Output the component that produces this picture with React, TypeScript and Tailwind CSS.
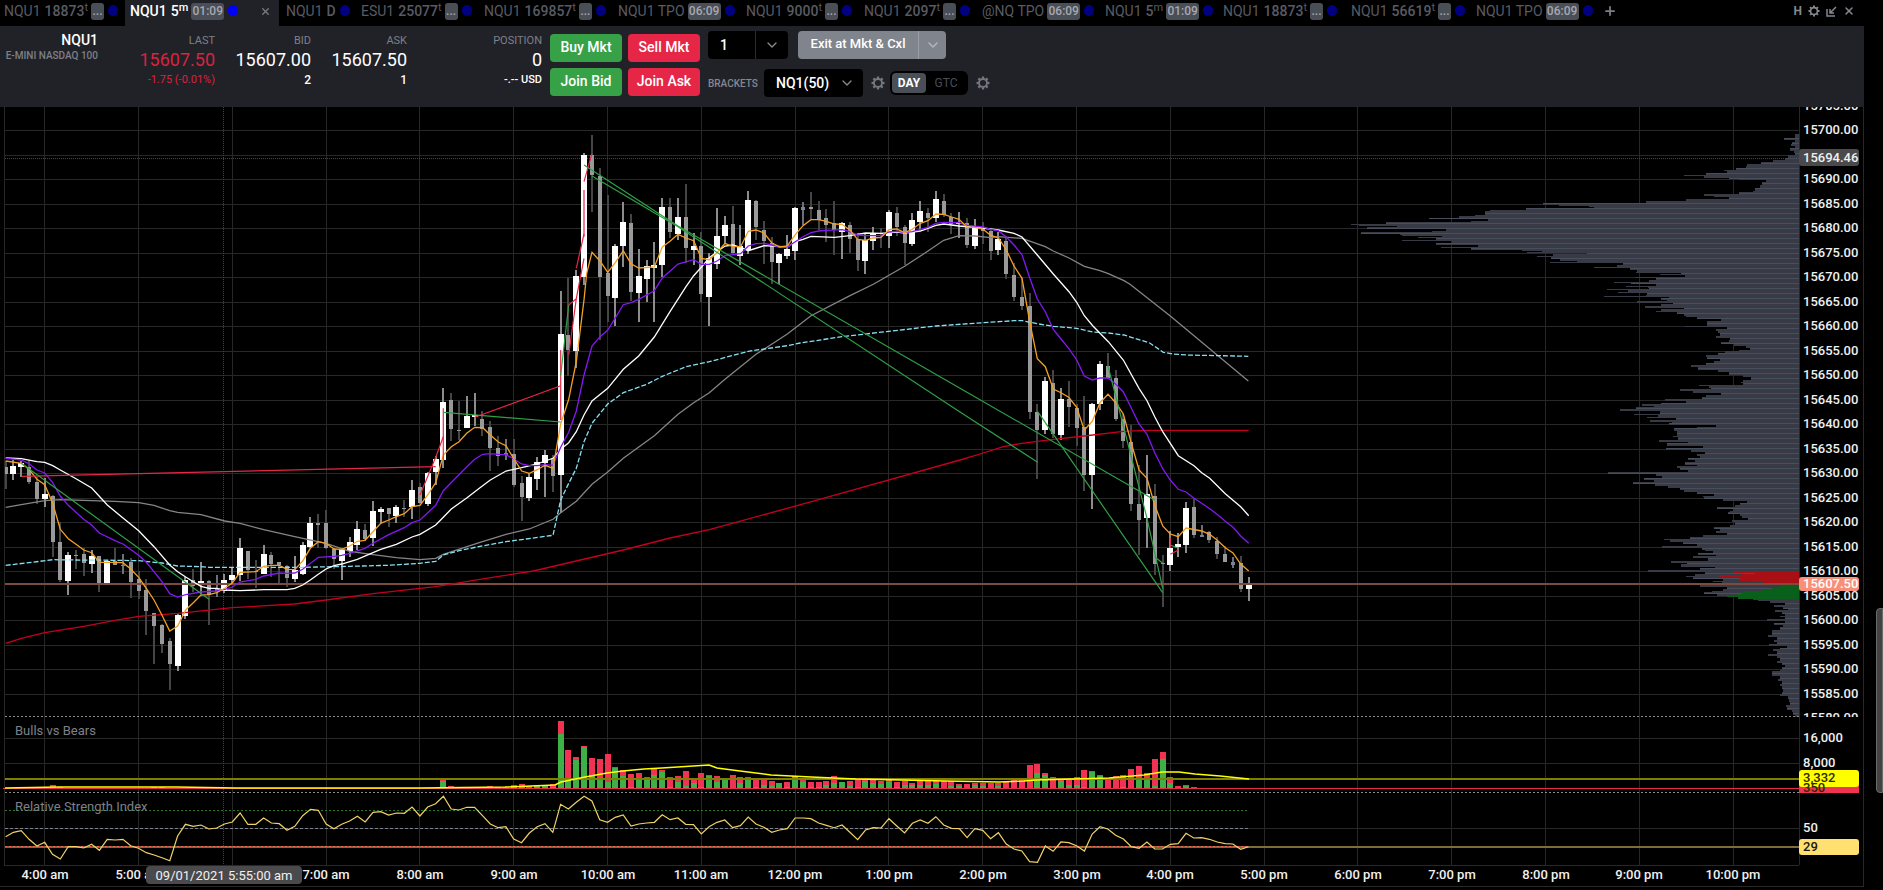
import { ChevronDown, Plus, X } from 'lucide-react';

/* ---------- tabs ---------- */

const tabs = [
  { symbol: 'NQU1', size: '18873', unit: 't', badge: '...', width: 'w-[125px]' },
  { symbol: 'NQU1', size: '5', unit: 'm', badge: '01:09', width: 'w-[154px]', active: true },
  { symbol: 'NQU1', size: 'D', unit: '', badge: '', width: 'w-[75px]' },
  { symbol: 'ESU1', size: '25077', unit: 't', badge: '...', width: 'w-[123px]' },
  { symbol: 'NQU1', size: '169857', unit: 't', badge: '...', width: 'w-[134px]' },
  { symbol: 'NQU1 TPO', size: '', unit: '', badge: '06:09', width: 'w-[128px]' },
  { symbol: 'NQU1', size: '9000', unit: 't', badge: '...', width: 'w-[118px]' },
  { symbol: 'NQU1', size: '2097', unit: 't', badge: '...', width: 'w-[118px]' },
  { symbol: '@NQ TPO', size: '', unit: '', badge: '06:09', width: 'w-[123px]' },
  { symbol: 'NQU1', size: '5', unit: 'm', badge: '01:09', width: 'w-[118px]' },
  { symbol: 'NQU1', size: '18873', unit: 't', badge: '...', width: 'w-[128px]' },
  { symbol: 'NQU1', size: '56619', unit: 't', badge: '...', width: 'w-[125px]' },
  { symbol: 'NQU1 TPO', size: '', unit: '', badge: '06:09', width: 'w-[128px]' },
];

/* ---------- chart geometry ---------- */

const LEFT = 5;
const RIGHT = 1799;
const TOP = 107;
const PRICE_BOTTOM = 717;
const VOLUME_BOTTOM = 789;
const BOTTOM = 865;

const barX = (i: number) => 44.7 + 7.817 * i;
const priceY = (price: number) => 130.6 + (15700 - price) * 4.9;

const hours = [
  '4:00 am', '5:00 am', '6:00 am', '7:00 am', '8:00 am', '9:00 am', '10:00 am', '11:00 am', '12:00 pm', '1:00 pm',
  '2:00 pm', '3:00 pm', '4:00 pm', '5:00 pm', '6:00 pm', '7:00 pm', '8:00 pm', '9:00 pm', '10:00 pm',
];
const prices = Array.from({ length: 26 }, (_, i) => 15705 - i * 5);

/* ---------- chart data ---------- */

type Point = [number, number];
type Block = [number, number, string];

const pairs = (text: string) =>
  text.trim().split(/\s+/).map((pair) => pair.split(',').map(Number) as Point);

// Points are stored in thirds of a pixel, relative to the origin of their block
const trace = (...blocks: Block[]) =>
  blocks
    .flatMap(([ox, oy, text]) =>
      pairs(text).map(([x, y]) => `${((x + ox) / 3).toFixed(1)},${((y + oy) / 3).toFixed(1)}`),
    )
    .join(' ');

// kind + high,bodyTop,bodyBottom,low (u = up, d = down, n = unchanged)
const candleBlocks: [number, number, string][] = [
  [-5, 1140, `d243,262,281,326 u240,258,282,299 u243,248,261,290 d240,262,306,311 d290,306,357,372
    u294,342,356,381 d345,348,486,532 d427,486,600,606 u517,525,603,644 d510,524,528,567 d503,522,549,588
    u511,529,552,578 d527,528,608,635 u542,543,611,611 d503,542,554,554 n522,555,559,581 d535,546,606,653
    d572,598,633,657 d598,630,692,764 d700,700,738,853 d732,735,793,818 d774,784,851,929 u702,706,857,872
    u590,600,708,716 d567,600,618,636 u546,603,612,643 d600,604,645,735 n585,628,636,651 u583,600,634,640
    u562,585,601,612 u475,504,584,602 d513,514,570,597 d540,572,575,625 u495,522,581,581 d516,524,552,591
    d546,547,556,612 d556,558,594,620 u528,570,598,605 u485,496,583,584 u411,430,500,504 d401,429,434,504
    d390,429,505,508 d505,507,538,566 u507,508,543,600 u470,486,512,532 u423,448,494,510 d432,450,478,483
    u363,394,474,497 u380,387,396,430 d384,385,402,440 u375,381,409,430 d360,384,388,410 u300,331,380,416
    d310,322,369,372 u276,279,371,377 u228,236,275,316 u24,67,240,264 d40,60,147,184`],
  [53, 330, `d873,959,963,990 u858,918,953,953 u850,915,922,947 d903,927,956,978 d933,951,1014,1082
    d978,1013,1038,1067 n987,1028,1036,1050 d987,1033,1124,1132 d1098,1120,1161,1232 u1090,1102,1163,1173
    u1040,1056,1107,1140 u1020,1035,1060,1161 d1036,1044,1098,1147 u543,671,1096,1210 d504,676,720,798
    u480,498,724,774 u129,136,500,525 d75,136,194,307 d174,198,502,690 d255,490,558,636 u402,408,563,648
    u276,337,408,472 d312,339,546,573 u417,498,548,637 u450,468,508,577 u397,465,473,636 u265,290,464,502
    d265,290,366,385 u265,321,372,390 d222,320,414,460 u370,408,419,465 d366,408,551,575 u430,444,560,648
    u294,377,461,477 u318,345,378,402 d288,341,430,432 u345,408,438,465 u243,270,420,432 d270,272,352,390
    d333,360,392,462 d380,400,455,521 u430,432,459,521 u375,418,438,446 u290,293,422,450 n276,292,300,345
    d246,290,296,326`],
  [99, 510, `d93,120,150,180 d118,143,165,215 d93,160,180,254 u155,160,186,267 d156,165,208,250
    d190,208,271,303 u192,210,273,311 u171,188,214,240 d175,189,193,234 u120,126,197,234 d111,128,172,197
    d164,170,219,285 u130,150,222,227 u93,123,156,178 d115,128,143,185 u63,87,144,156 d72,92,136,140
    d130,140,162,193 u126,158,163,203 d145,158,224,233 u147,167,228,237 d155,172,184,222 d180,183,242,270
    u186,206,240,255 d205,214,312,326 d280,316,381,392 d320,381,408,419`],
  [126, 840, `d40,78,396,418 d373,396,450,598 u291,304,450,461 d270,309,462,474 u324,356,465,480
    d303,357,381,440 d372,384,444,498 d348,441,584,632 u369,371,586,687 u243,252,372,390 d219,258,293,296
    d270,294,416,423 d402,417,483,503 d435,486,672,693 d555,672,720,825 u525,642,714,804 d612,648,852,885
    d825,848,853,980 u752,804,854,872 u758,793,801,830 u666,684,794,819 d654,681,765,773 n735,764,770,772
    d752,757,780,788 d771,782,822,837 d798,822,846,847 n831,846,856,864 d828,850,927,935 u891,912,927,963`],
];

const candles = candleBlocks.flatMap(([start, base, text]) =>
  text.trim().split(/\s+/).map((item, k) => {
    const [high, top, bottom, low] = item.slice(1).split(',').map((v) => Math.round((Number(v) + base) / 3));
    return { i: start + k, kind: item[0], high, top, bottom, low };
  }),
);

const bodyFill: Record<string, string> = { u: '#ffffff', d: '#999999', n: '#7d8290' };
const wickFill: Record<string, string> = { u: '#8c8c8c', d: '#454545', n: '#6a6f7c' };

const fastEma = trace(
  [0, 1140, `17,243 64,250 87,268 111,298 134,314 158,370 181,448 205,476 228,493 251,510 275,518 298,547 322,547
    369,548 392,567 416,592 439,625 462,660 486,706 509,753 533,738 557,690 580,668 603,645 627,644 650,638
    674,625 697,609 720,577 767,575 791,559 814,556 838,556 861,568 884,569 908,543 931,505 955,485 978,490
    1002,507 1025,508 1049,498 1072,484 1095,481 1119,455 1142,430 1166,420 1189,410 1213,401 1236,380 1260,376
    1283,345 1307,308 1330,225 1354,200 1377,185 1400,160`],
  [1260, 330, `164,952 188,953 211,975 235,996 258,1007 281,1046 305,1083 328,1090 352,1079 375,1066 399,1075
    422,942 446,868 469,755 492,570 500,490 516,427 540,453 563,487 586,458 610,422 633,461 656,474 703,471
    727,411 750,394 774,373 798,384 821,392 844,445 868,449 891,428 915,400 938,410 962,410 985,364 1008,360
    1032,369 1055,398 1079,411 1102,408 1126,374 1149,347 1173,329`],
  [2400, 510, `56,149 79,154 103,162 126,163 150,181 173,208 197,211 220,204 243,202 267,179 290,177 314,188
    337,178 361,160 384,152 408,132 431,133 455,141 477,148 502,172 525,172 548,177 572,196 595,203 619,240
    642,288 666,325 689,455 712,566 736,590`],
  [2880, 840, `280,327 303,338 326,352 350,382 373,450 397,424 420,368 444,343 467,368 490,402 514,489 537,570
    561,595 584,675 608,738 631,762 655,770 678,744 725,753 749,763 771,780 796,803 819,819 842,852 866,873`],
);

const midEma = trace(
  [0, 1140, `17,235 64,240 87,251 111,270 134,279 158,308 181,348 205,376 251,418 275,435 298,459 345,482 369,492
    416,526 439,547 486,605 509,641 533,651 557,644 603,636 650,633 674,628 697,621 720,606 767,598 791,588
    838,579 861,580 884,579 908,568 955,532 1002,529 1025,526 1049,520 1095,505 1119,490 1166,464 1213,443
    1236,428 1260,420 1307,376 1330,332 1377,284 1400,261`],
  [1260, 330, `164,1048 188,1033 211,1031 235,1033 258,1034 281,1047 305,1062 328,1067 352,1067 375,1064 399,1066
    422,1012 446,967 469,903 492,795 516,708 540,680 563,661 610,584 633,578 656,568 703,542 727,504 774,462
    821,449 844,463 868,463 891,453 915,437 962,431 985,408 1008,401 1032,400 1055,405 1079,411 1102,411
    1126,395 1149,380 1173,368`],
  [2400, 510, `56,183 79,181 126,179 150,185 173,195 197,197 243,197 267,186 290,184 314,188 337,185 361,178
    384,172 408,160 431,157 477,158 502,166 548,171 572,178 595,182 619,201 642,225 666,254 689,323 712,387
    736,425`],
  [2880, 840, `280,148 303,177 326,205 350,240 373,288 397,300 420,294 444,294 467,312 490,336 514,384 537,432
    561,463 584,518 608,566 631,600 655,628 678,636 702,655 725,670 749,686 771,703 796,724 819,742 842,768
    866,790`],
);

const slowEma = trace(
  [0, 1140, `17,234 64,236 111,245 134,247 158,257 181,270 228,296 275,324 322,375 369,414 416,452 462,500
    509,555 533,575 557,591 580,605 603,619 627,625 650,625 674,630 720,632 791,629 861,629 884,625 908,615
    931,600 955,583 978,567 1002,557 1025,552 1072,538 1119,518 1142,508 1189,493 1236,471 1260,463 1307,435
    1330,412 1354,387 1400,354 1440,323`],
  [1260, 330, `211,1110 258,1083 305,1073 352,1062 375,1053 399,1045 422,1018 446,998 469,965 492,915 516,873
    563,835 610,778 656,738 703,681 750,605 798,530 821,497 844,472 868,443 891,425 915,408 938,405 962,412
    985,422 1032,407 1102,411 1126,395 1149,388 1173,379`],
  [2400, 510, `33,199 103,202 150,197 197,189 243,190 290,186 314,189 361,183 408,166 431,162 477,168 548,174
    595,180 642,190 666,201 712,255 760,312 807,365 830,397 853,437 878,467 925,515`],
  [2880, 840, `490,240 537,325 561,362 584,410 608,455 655,527 702,557 725,578 749,595 796,641 842,680 866,707`],
);

const sma = trace(
  [0, 1140, `17,382 64,374 134,362 181,359 251,361 345,364 416,368 462,376 509,392 533,397 603,404 674,423
    720,430 791,449 884,470 978,490 1049,514 1119,524 1189,533 1260,539 1307,535 1330,523 1440,487`],
  [1260, 330, `258,1273 328,1257 399,1228 422,1208 469,1174 516,1123 563,1086 610,1045 703,977 774,913 821,878
    868,848 915,808 1008,733 1102,672`],
  [2400, 510, `0,463 33,437 150,377 220,343 314,289 384,243 431,211 477,197 525,198 572,203 595,200 666,205
    736,230 760,243 807,264 853,289 900,302 925,311 972,332 990,343 1111,438 1345,633`],
);

const vwap = trace(
  [0, 1140, `17,556 87,548 158,539 228,540 345,541 416,542 486,549 533,558 603,560 627,562 908,562 1049,559
    1166,556 1260,550 1307,544 1330,525 1377,512 1440,499`],
  [1260, 330, `258,1295 399,1276 422,1170 446,1120 469,1075 492,995 516,940 563,882 610,848 680,823 727,799
    798,770 868,755 985,724 1102,707`],
  [2400, 510, `0,519 126,500 267,484 408,468 548,458 642,452 666,452 712,461 760,469 830,475 878,486 925,489
    972,495 1049,519 1090,547 1120,552 1160,555 1345,559`],
);

const longSma = trace(
  [0, 1140, '17,790 64,775 134,758 251,739 345,721 416,709 533,700 697,683 884,672 978,660 1119,641 1307,620 1440,598'],
  [1260, 330, '340,1383 610,1320 750,1284 868,1259 1196,1169'],
  [2880, 840, '0,540 70,519 130,500 185,490 280,478 373,468 490,454 560,451 866,451'],
);

const redTrades = [
  trace([0, 1140, '64,289 1307,260']),
  trace([0, 1140, '1260,345 1307,232 1330,170']),
  trace([0, 1140, '1330,85 1330,240']),
  trace([1260, 330, '164,922 422,827']),
  trace([1260, 330, '422,720 422,930']),
  trace([1260, 330, '446,735 469,566 446,585']),
  trace([1260, 330, '469,475 492,372']),
  trace([1260, 330, '469,566 492,445']),
  trace([1260, 330, '492,240 492,380']),
  trace([1260, 330, '492,215 516,130']),
  trace([2880, 840, '631,773 631,803']),
  trace([2880, 840, '631,823 655,810']),
];

const greenTrades = [
  trace([0, 1140, '64,250 627,658']),
  trace([1260, 330, '71,907 422,936']),
  trace([1260, 330, '422,795 446,585']),
  trace([1260, 330, '492,165 774,348'], [2880, 840, '0,325 584,660']),
  trace([1260, 330, '516,198 774,350'], [2880, 840, '0,396 233,547']),
  trace([2880, 840, '233,395 608,938']),
  trace([2880, 840, '444,258 561,715 608,925']),
  trace([2880, 840, '584,830 608,850']),
  trace([2880, 840, '631,795 655,805']),
];

/* Volume profile: y,left edge for each row, right aligned */
const profileOutline = (base: number, edge: number, scale: number, text: string) => {
  const rows = pairs(text);
  let d = `M${RIGHT},${(base + rows[0][0] / 3).toFixed(1)}`;
  rows.forEach(([y, x], k) => {
    const next = k + 1 < rows.length ? rows[k + 1][0] : y + 4;
    d += `V${(base + y / 3).toFixed(1)}H${(RIGHT - (edge - x) / scale).toFixed(1)}V${(base + next / 3).toFixed(1)}`;
  });
  return `${d}H${RIGHT}Z`;
};

const upperProfile = profileOutline(99, 1330, 2.835, `106,1318 112,1318 117,1288 122,1318 128,1310 134,1308 140,1318
  148,1305 155,1315 163,1318 168,1300 176,1290 182,1255 188,1222 195,1182 202,1180 207,1150 212,1118 217,1125
  221,1065 227,1003 232,1060 236,1132 240,1160 242,1235 250,1225 258,1220 262,1218 268,1205 275,1200 280,1160
  285,1060 290,1090 295,1130 300,1010 305,895 310,895 313,603 317,650 322,735 325,748 328,555 332,455 337,440
  343,440 348,410 352,366 356,280 360,448 365,400 370,160 374,60 378,82 382,190 385,105 390,330 395,290 400,88
  404,200 408,205 412,318 415,250 418,300 423,203 427,345 431,300 437,420 443,316 448,400 452,545 457,600 460,560
  463,730 466,632 470,587 475,628 481,652 485,700 489,623 493,832 497,815 503,750 508,850 514,870 518,868 523,995
  526,935 529,1008 533,865 538,925 543,905 548,806 552,853 556,925 560,840 563,903 567,905 570,785 574,845
  578,818 582,900 587,895 591,778 595,960 598,940 602,955 606,870 612,972 616,940 621,893 626,1003 629,940
  635,925 640,985 645,1005 650,1010 655,1040 660,1110 665,1068 670,1070 675,1070 680,1008 684,1125 690,1095
  697,1100 703,1105 710,1095 716,1135 722,1130 728,1108 734,1145 740,1180 747,1190 752,1160 755,1120 762,1100
  768,1067 775,1068 780,1105 785,1090 792,1065 797,1025 805,1043 812,1100 820,1130 828,1170 835,1195 842,1170
  848,1165 853,1170 857,1047 862,1075 868,1080 871,993 876,1030 882,1110 888,1065 894,1055 900,950 905,1010
  912,940 916,885 922,920 925,867 930,822 937,935 944,863 948,930 954,900 958,980 962,908 968,970 973,960
  978,1095 985,1040`);

const lowerProfile = profileOutline(399, 657, 3, `88,283 95,290 103,290 110,280 115,295 122,238 128,325 133,262
  140,370 147,258 153,333 160,375 166,350 172,360 177,325 184,345 190,315 197,350 201,290 208,300 213,325 220,85
  226,228 232,245 238,192 244,222 249,158 255,225 262,265 268,300 273,312 278,350 284,402 290,370 295,372 300,430
  306,500 313,480 317,465 323,411 329,460 335,450 339,443 345,480 350,485 357,503 362,455 369,465 377,450 384,402
  390,420 397,408 402,440 408,370 414,330 419,252 424,270 430,308 436,350 440,245 446,365 453,375 457,400 461,355
  467,408 472,340 477,385 485,272 491,320 496,303 503,405 508,360 514,205 519,375 525,345 530,318 535,340 539,430
  545,400 550,425 558,360 565,440 570,430 576,395 580,372 586,410 590,440 595,520 603,535 607,570 612,615 618,583
  623,610 630,625 634,585 640,605 645,615 650,600 655,615 661,561 667,615 671,583 678,610 685,600 692,575 700,575
  707,565 715,590 723,583 730,590 736,568 740,620 746,600 750,580 757,590 765,565 771,590 777,600 785,590 793,605
  798,615 805,605 812,600 817,577 824,577 830,600 840,595 847,605 855,600 862,605 870,610 878,605 885,600 890,625
  900,628 910,630 918,617 925,620 932,635 940,640 949,645`);

const askProfile = profileOutline(399, 657, 3, '517,460 522,525 526,485 529,417 533,480 541,480 545,520 549,550');
const bidProfile = profileOutline(399, 657, 3, '558,600 563,590 567,575 571,545 575,485 580,485 585,470 590,440 595,475');

// total,green for each bar, the last one at 4:50 pm
const volumes = pairs(`264,266 265,266 264,268 264,268 264,268 263,268 256,264 260,268 264,265 265,268 265,268
  264,268 265,268 265,267 264,268 265,268 265,266 265,268 264,268 262,264 261,265 265,268 265,266 263,265 263,265
  265,266 265,268 265,268 264,266 265,268 266,268 265,267 265,268 266,268 266,267 265,268 266,268 266,268 265,267
  264,266 265,268 265,266 264,268 266,268 266,267 265,268 264,265 266,268 266,267 265,267 266,267 265,266 265,266
  263,268 263,264 264,266 237,243 258,264 261,265 262,266 261,267 262,268 258,264 262,268 262,268 255,264 252,260
  259,263 256,258 255,257 252,262 64,102 150,237 171,180 138,140 175,224 177,236 161,246 201,203 210,228 221,262
  220,238 230,237 207,224 210,215 230,262 228,246 213,258 235,250 220,262 226,228 227,246 234,240 225,266 230,250
  232,238 238,260 239,254 244,258 248,250 246,260 228,230 238,247 246,260 247,262 243,256 228,250 245,247 242,257
  240,262 238,243 240,250 243,253 240,246 246,262 243,255 249,255 244,254 243,254 243,252 243,266 242,257 251,257
  252,264 250,255 250,257 248,264 250,257 246,266 238,266 238,264 195,264 192,219 220,225 232,266 237,243 238,256
  231,254 210,260 213,215 226,228 237,266 227,266 224,260 207,264 197,240 220,240 178,258 156,176 231,248 257,263
  255,257 262,266 265,267 266,267 266,268 266,267 266,268 265,267 266,267`);
const firstVolume = 155 - volumes.length;

const volumeAverage =
  '5,788 59,787 177,787 236,788 340,788 420,788 505,787 555,785 561,782 585,777 607,773 623,771 644,769 662,768 ' +
  '709,765 717,768 740,771 771,775 811,777 856,779 901,780 946,781 999,782 1024,781 1036,780 1073,779 1109,778 ' +
  '1144,775 1162,772 1179,772 1195,774 1220,776 1249,779';

const rsi = `410 397 392 418 438 427 463 477 440 440 444 433 451 418 420 418 437 445 458 465 473 482 408 373 379 375
  387 384 372 366 339 373 373 354 369 371 391 379 347 328 331 372 386 373 363 349 366 337 335 345 339 340 321 348
  321 311 289 327 330 322 322 347 372 383 380 417 428 399 380 371 397 313 327 307 289 303 359 367 352 345 378 372
  369 367 344 359 354 373 374 402 380 367 360 383 377 351 372 382 397 390 386 354 354 356 369 376 383 375 397 419
  390 383 384 356 378 399 370 360 370 350 375 385 386 413 386 391 416 398 432 447 453 485 487 438 454 426 428 437
  453 402 380 387 406 417 440 445 426 447 447 433 431 400 414 413 418 426 431 432 448 440`;
const rsiValues = rsi.trim().split(/\s+/).map(Number);
const rsiPoints = rsiValues
  .map((v, k) => `${barX(k + 155 - rsiValues.length).toFixed(1)},${(700 + v / 3).toFixed(1)}`)
  .join(' ');

/* ---------- components ---------- */

function Gear({ size }: { size: number }) {
  return (
    <svg width={size} height={size} viewBox="0 0 16 16" fill="none" stroke="currentColor">
      <circle cx="8" cy="8" r="4.6" strokeWidth="2.2" />
      {[0, 45, 90, 135, 180, 225, 270, 315].map((angle) => (
        <path key={angle} d="M8 0.6V3" strokeWidth="2.6" transform={`rotate(${angle} 8 8)`} />
      ))}
    </svg>
  );
}

function TabStrip() {
  return (
    <nav className="flex h-[26px] overflow-hidden bg-black text-sm leading-[18px] text-[#585b64]">
      {tabs.map((tab, index) => (
        <div
          key={index}
          className={`flex shrink-0 items-start pt-0.5 whitespace-nowrap ${tab.width} ${
            tab.active ? 'bg-[#212228] pl-[5px] text-white' : index === 0 ? 'pl-1' : 'pl-[7px]'
          }`}
        >
          <button type="button" className={`flex ${tab.active ? 'font-medium' : ''}`}>
            <span>{tab.symbol}</span>
            {tab.size && <span className="ml-1 font-medium">{tab.size}</span>}
            {tab.unit && <sup className="top-0 text-[11px] leading-3">{tab.unit}</sup>}
          </button>
          {tab.badge && (
            <span
              className={`mt-px ml-[3px] h-[17px] rounded-[3px] bg-[#4a4e57] text-center text-xs leading-[17px] font-medium text-[#a5a8b0] ${
                tab.badge === '...' ? 'w-[13px]' : 'w-[33px]'
              }`}
            >
              {tab.badge}
            </span>
          )}
          <span
            className={`mt-[3px] ml-1 h-[11px] w-2.5 rounded-full ${tab.active ? 'bg-[#0000ff]' : 'bg-[#000080]'}`}
          />
          {tab.active && (
            <button type="button" aria-label="Close tab" className="mt-1 mr-2 ml-auto text-[#777a82]">
              <X size={11} strokeWidth={3} />
            </button>
          )}
        </div>
      ))}
      <button type="button" aria-label="Add tab" className="ml-1.5 self-start pt-1 text-[#7c7f87]">
        <Plus size={14} strokeWidth={3} />
      </button>
      <div className="mt-[5px] mr-[9px] ml-auto flex shrink-0 items-center gap-1.5 self-start text-[#85888f]">
        <button type="button" className="text-xs leading-3 font-bold">H</button>
        <button type="button" aria-label="Settings"><Gear size={12} /></button>
        <button type="button" aria-label="Detach">
          <svg width="11" height="11" viewBox="0 0 11 11" fill="none" stroke="currentColor" strokeWidth="1.5">
            <path d="M1 3v7h8M10 1L4 7M4 3v4h4" />
          </svg>
        </button>
        <button type="button" aria-label="Close"><X size={12} strokeWidth={3} /></button>
      </div>
    </nav>
  );
}

function Quote({ label, value, note, width, tone = 'text-white', noteTone = '' }: {
  label: string;
  value: string;
  note: string;
  width: string;
  tone?: string;
  noteTone?: string;
}) {
  return (
    <div className={`shrink-0 pt-[7px] text-right ${width} ${tone}`}>
      <div className="text-[11px] leading-4 text-[#7d8088]">{label}</div>
      <div className="text-lg leading-[22px]">{value}</div>
      <div className={`leading-[18px] whitespace-nowrap ${noteTone}`}>{note}</div>
    </div>
  );
}

function OrderBar() {
  const order = 'h-7 rounded text-sm font-medium text-white pb-0.5';
  return (
    <header className="flex h-[81px] overflow-hidden bg-[#212228] text-white">
      <div className="w-[98px] shrink-0 pt-[5px] text-right">
        <div className="text-sm leading-[18px] font-medium">NQU1</div>
        <div className="text-[10px] leading-[14px] font-medium whitespace-nowrap text-[#7d8088]">E-MINI NASDAQ 100</div>
      </div>
      <Quote
        label="LAST"
        value="15607.50"
        note="-1.75 (-0.01%)"
        width="w-[117px]"
        tone="text-[#d9233f]"
        noteTone="text-[11px]"
      />
      <Quote label="BID" value="15607.00" note="2" width="w-24" noteTone="text-xs font-medium" />
      <Quote label="ASK" value="15607.50" note="1" width="w-24" noteTone="text-xs font-medium" />
      <Quote label="POSITION" value="0" note="-.-- USD" width="w-[135px]" noteTone="text-[11px] font-medium" />

      <div className="mt-2 ml-2 grid shrink-0 grid-cols-[72px_72px] content-start gap-1.5">
        <button type="button" className={`bg-[#37a148] ${order}`}>Buy Mkt</button>
        <button type="button" className={`bg-[#e62647] ${order}`}>Sell Mkt</button>
        <button type="button" className={`bg-[#37a148] ${order}`}>Join Bid</button>
        <button type="button" className={`bg-[#e62647] ${order}`}>Join Ask</button>
      </div>

      <div className="mt-[5px] ml-2 flex flex-col gap-2.5">
        <div className="flex gap-2.5">
          <div className="flex h-7 w-20 overflow-hidden rounded bg-black">
            <input
              aria-label="Quantity"
              defaultValue="1"
              className="w-[47px] bg-transparent pl-3 text-sm font-medium text-white outline-none"
            />
            <button
              type="button"
              aria-label="Choose quantity"
              className="flex flex-1 items-center justify-center border-l border-[#2b2c31] text-[#85888f]"
            >
              <ChevronDown size={16} />
            </button>
          </div>
          <div className="flex h-7 rounded bg-[#80848d] text-white">
            <button type="button" className="w-[120px] pb-0.5 text-[13px] font-medium whitespace-nowrap">
              Exit at Mkt &amp; Cxl
            </button>
            <button
              type="button"
              aria-label="More exit actions"
              className="flex w-7 items-center justify-center border-l border-[#9b9ea6] text-[#b5b8bf]"
            >
              <ChevronDown size={16} />
            </button>
          </div>
        </div>
        <div className="flex items-center">
          <label htmlFor="brackets" className="w-14 text-[10px] font-medium text-[#85888f]">BRACKETS</label>
          <div className="relative">
            <select
              id="brackets"
              className="h-7 w-[99px] appearance-none rounded bg-black pl-3 text-sm font-medium text-white outline-none"
            >
              <option>NQ1(50)</option>
            </select>
            <ChevronDown size={16} className="pointer-events-none absolute top-1.5 right-2 text-[#85888f]" />
          </div>
          <button type="button" aria-label="Bracket settings" className="ml-2 text-[#74777f]">
            <Gear size={14} />
          </button>
          <div className="ml-[5px] flex h-6 w-[78px] rounded-md bg-black p-0.5">
            <button type="button" className="w-[34px] rounded bg-[#4a4e57] text-xs font-bold text-white">DAY</button>
            <button type="button" className="flex-1 text-xs text-[#4a4e57]">GTC</button>
          </div>
          <button type="button" aria-label="Order settings" className="ml-2 text-[#74777f]">
            <Gear size={14} />
          </button>
        </div>
      </div>
    </header>
  );
}

function Chart() {
  return (
    <svg
      viewBox="0 107 1864 783"
      className="block h-auto w-full"
      fontFamily="Roboto, sans-serif"
      fontSize="13"
      role="img"
      aria-label="NQU1 five minute chart"
    >
      <defs>
        <clipPath id="price-pane"><rect x={LEFT} y={TOP} width={RIGHT - LEFT} height={PRICE_BOTTOM - TOP} /></clipPath>
        <clipPath id="price-axis"><rect x={RIGHT} y={TOP} width="65" height={PRICE_BOTTOM - TOP} /></clipPath>
        <pattern id="profile-rows" width="10" height="5" patternUnits="userSpaceOnUse">
          <rect width="10" height="5" fill="#383b45" />
          <rect y="3" width="10" height="1" fill="#474e5c" />
        </pattern>
      </defs>

      {/* grid */}
      <g shapeRendering="crispEdges" fill="#282828">
        {prices.slice(1, -1).map((price) => (
          <rect key={price} x={LEFT} y={Math.floor(priceY(price))} width={RIGHT - LEFT} height="1" />
        ))}
        {[738, 763, 828].map((y) => (
          <rect key={y} x={LEFT} y={y} width={RIGHT - LEFT} height="1" />
        ))}
        {hours.map((hour, k) => (
          <rect key={hour} x={Math.floor(barX(k * 12))} y={TOP} width="1" height={BOTTOM - TOP} />
        ))}
        <rect x={LEFT - 1} y={TOP} width="1" height={BOTTOM - TOP} />
        <rect x={LEFT - 1} y={BOTTOM} width={RIGHT - LEFT + 1} height="1" />
        <rect x={RIGHT} y={TOP} width="1" height={BOTTOM - TOP} />
        <rect x="0" y="886" width="1864" height="1" />
        <rect x="1863" y={TOP} width="1" height="779" />
      </g>

      {/* volume profile */}
      <g shapeRendering="crispEdges">
        <path d={upperProfile} fill="url(#profile-rows)" />
        <path d={lowerProfile} fill="url(#profile-rows)" />
        <path d={askProfile} fill="#a81016" />
        <path d={bidProfile} fill="#08601a" />
      </g>

      {/* crosshair */}
      <g stroke="#444" strokeDasharray="1 1" shapeRendering="crispEdges">
        <line x1={LEFT} y1="158.5" x2={RIGHT} y2="158.5" />
        <line x1="223.5" y1={TOP} x2="223.5" y2={BOTTOM} />
      </g>

      <g clipPath="url(#price-pane)">
        <g shapeRendering="crispEdges">
          {candles.map((c) => {
            const x = Math.round(barX(c.i));
            const half = c.kind === 'u' ? 3 : 2;
            return (
              <g key={c.i}>
                <rect x={x - 1} y={c.high} width="2" height={c.low - c.high} fill={wickFill[c.kind]} />
                <rect
                  x={x - half}
                  y={c.top}
                  width={half * 2}
                  height={Math.max(1, c.bottom - c.top)}
                  fill={bodyFill[c.kind]}
                />
              </g>
            );
          })}
          <rect x={LEFT} y="583" width={RIGHT - LEFT} height="2" fill="#7d4a3d" />
        </g>
        <g fill="none" strokeWidth="1.3">
          <polyline points={longSma} stroke="#c4001f" />
          <polyline points={sma} stroke="#858585" />
          <polyline points={vwap} stroke="#85e2f5" strokeDasharray="5 2" />
          <polyline points={slowEma} stroke="#ffffff" />
          <polyline points={midEma} stroke="#8418f5" />
          <polyline points={fastEma} stroke="#f5a023" />
          {redTrades.map((points, k) => <polyline key={k} points={points} stroke="#e62647" strokeWidth="1.2" />)}
          {greenTrades.map((points, k) => <polyline key={k} points={points} stroke="#2fa046" strokeWidth="1.2" />)}
        </g>
      </g>

      {/* bulls vs bears */}
      <g shapeRendering="crispEdges">
        {volumes.map(([total, green], k) => {
          const x = Math.round(barX(firstVolume + k)) - 3;
          const top = Math.round(700 + total / 3);
          const mid = Math.round(700 + green / 3);
          return (
            <g key={k}>
              <rect x={x} y={top} width="6" height={Math.max(0, VOLUME_BOTTOM - top)} fill="#f23252" />
              <rect x={x} y={mid} width="6" height={Math.max(0, VOLUME_BOTTOM - mid)} fill="#3eb045" />
            </g>
          );
        })}
        <rect x={LEFT} y="788" width={RIGHT - LEFT} height="1" fill="#e62c4a" />
        <rect x={LEFT} y="778" width={RIGHT - LEFT} height="2" fill="#808000" />
      </g>
      <polyline points={volumeAverage} fill="none" stroke="#ffff00" strokeWidth="1.5" />

      {/* relative strength index */}
      <g shapeRendering="crispEdges">
        <rect x={LEFT} y="846" width={RIGHT - LEFT} height="2" fill="#806c36" />
        <g strokeDasharray="2 2">
          <line x1={LEFT} y1="716.5" x2={RIGHT} y2="716.5" stroke="#8c8c8c" />
          <line x1={LEFT} y1="792.5" x2={RIGHT} y2="792.5" stroke="#8c8c8c" />
          <line x1={LEFT} y1="810.5" x2="1249" y2="810.5" stroke="#2b7a22" />
          <line x1={LEFT} y1="828.5" x2="1249" y2="828.5" stroke="#7d8290" strokeDasharray="3 2" />
          <line x1={LEFT} y1="846.5" x2="1249" y2="846.5" stroke="#ff5a5a" />
        </g>
      </g>
      <polyline points={rsiPoints} fill="none" stroke="#f0d266" strokeWidth="1.2" />

      <g fill="#7d8088">
        <text x="15" y="735">Bulls vs Bears</text>
        <text x="15" y="811">Relative Strength Index</text>
      </g>

      {/* axes */}
      <g fill="#f0f0f0" fontWeight="500">
        <g clipPath="url(#price-axis)">
          {prices.map((price) => (
            <text key={price} x="1803" y={Math.floor(priceY(price)) + 4}>{price.toFixed(2)}</text>
          ))}
        </g>
        <text x="1803" y="742">16,000</text>
        <text x="1803" y="767">8,000</text>
        <text x="1803" y="832">50</text>
        {hours.map((hour, k) => (
          <text key={hour} x={Math.round(barX(k * 12))} y="879" textAnchor="middle">{hour}</text>
        ))}
      </g>

      {/* value markers */}
      <g fontWeight="500">
        <rect x="1799" y="149" width="60" height="17" rx="3" fill="#4a4a4c" />
        <text x="1803" y="162" fill="#f0f0f0">15694.46</text>
        <rect x="1799" y="577" width="60" height="14" rx="3" fill="#f98f78" />
        <text x="1803" y="588" fill="#ffffff">15607.50</text>
        <path d="M1799 784h60v9h-60z" fill="#f23252" />
        <rect x="1799" y="770" width="60" height="17" rx="3" fill="#ffff00" />
        <g fill="#2b2b00">
          <text x="1803" y="782">3,332</text>
          <text x="1803" y="792">350</text>
        </g>
        <rect x="1799" y="839" width="60" height="16" rx="3" fill="#ffe070" />
        <text x="1803" y="851" fill="#1a1a1a">29</text>
      </g>
      <rect x="146" y="866" width="156" height="18" rx="4" fill="#4a4a4c" />
      <text x="224" y="880" textAnchor="middle" fill="#f0f0f0">09/01/2021 5:55:00 am</text>
    </svg>
  );
}

export default function App() {
  return (
    <div className="flex min-h-screen bg-black font-[Roboto,sans-serif]">
      <main className="min-w-0 flex-1">
        <TabStrip />
        <OrderBar />
        <Chart />
      </main>
      <div className="flex w-[19px] shrink-0 justify-end pt-[608px]">
        <div className="h-[185px] w-[7px] rounded-l border border-[#6b6b6b] bg-[#434343]" />
      </div>
    </div>
  );
}
